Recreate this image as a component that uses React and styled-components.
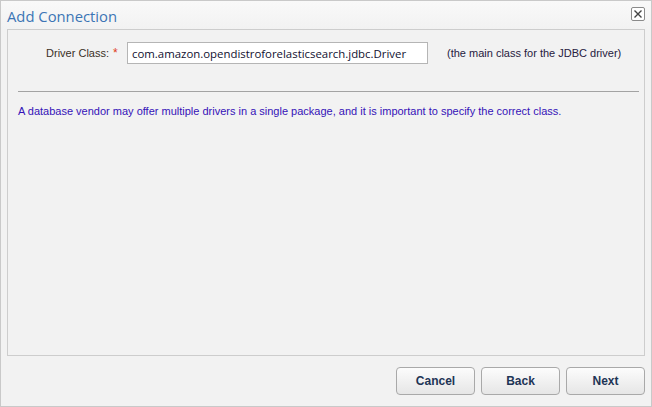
import React from 'react';
import styled, { createGlobalStyle } from 'styled-components';

const GlobalStyle = createGlobalStyle`
  html, body {
    margin: 0;
    padding: 0;
    background: #fff;
  }
  * {
    box-sizing: border-box;
  }
`;

const Window = styled.div`
  width: 652px;
  height: 407px;
  border: 1px solid #c9c9c9;
  background: #f2f2f2;
  display: flex;
  flex-direction: column;
  font-family: 'Liberation Sans', Arial, sans-serif;
`;

const TitleBar = styled.div`
  height: 28px;
  display: flex;
  align-items: center;
  justify-content: space-between;
  padding: 0 6px 0 6px;
  background: linear-gradient(#f9f9f9, #f2f2f2);
`;

const Title = styled.div`
  font-family: 'Open Sans', 'Liberation Sans', sans-serif;
  font-size: 14.8px;
  color: #3c75b5;
  margin-top: 2px;
`;

const CloseButton = styled.div`
  width: 14px;
  height: 14px;
  border: 1px solid #8a8a8a;
  border-radius: 2px;
  background: #fff;
  display: flex;
  align-items: center;
  justify-content: center;
  margin-top: -2px;
`;

const Panel = styled.div`
  flex: 1;
  margin: 0 6px;
  border: 1px solid #cdcdcd;
  padding: 12px 5px 0 10px;
`;

const FormRow = styled.div`
  display: flex;
  align-items: center;
  height: 22px;
`;

const Label = styled.div`
  width: 91px;
  text-align: right;
  font-size: 11px;
  color: #3a3026;
`;

const Required = styled.span`
  color: #e03b1a;
  font-size: 12px;
  margin-left: 4px;
  width: 14px;
`;

const TextInput = styled.input`
  width: 301px;
  height: 22px;
  border: 1px solid #b5b5b5;
  background: #fff;
  padding: 0 4px;
  font-family: 'Open Sans', 'Liberation Sans', sans-serif;
  font-size: 11.4px;
  color: #101030;
  outline: none;
`;

const Hint = styled.div`
  margin-left: 19px;
  font-size: 11px;
  color: #262040;
`;

const Divider = styled.hr`
  margin: 27px 0 0 0;
  border: none;
  border-top: 1px solid #a3a3a3;
  height: 0;
`;

const Description = styled.p`
  margin: 13px 0 0;
  font-size: 11px;
  color: #3512b8;
`;

const Footer = styled.div`
  height: 50px;
  display: flex;
  justify-content: flex-end;
  align-items: flex-start;
  gap: 6px;
  padding: 11px 6px 0 0;
`;

const Button = styled.button`
  width: 79px;
  height: 28px;
  border: 1px solid #a9a9a9;
  border-radius: 4px;
  background: linear-gradient(#fcfcfc, #e6e6e6);
  font-family: 'Liberation Sans', Arial, sans-serif;
  font-weight: bold;
  font-size: 12px;
  color: #1e3556;
  cursor: pointer;
`;

export default function App() {
  return (
    <>
      <GlobalStyle />
      <Window>
        <TitleBar>
          <Title>Add Connection</Title>
          <CloseButton>
            <svg width="10" height="10" viewBox="0 0 10 10">
              <path d="M1.5 1.5 L8.5 8.5 M8.5 1.5 L1.5 8.5" stroke="#444" strokeWidth="1.4" />
            </svg>
          </CloseButton>
        </TitleBar>
        <Panel>
          <FormRow>
            <Label>Driver Class:</Label>
            <Required>*</Required>
            <TextInput defaultValue="com.amazon.opendistroforelasticsearch.jdbc.Driver" />
            <Hint>(the main class for the JDBC driver)</Hint>
          </FormRow>
          <Divider />
          <Description>
            A database vendor may offer multiple drivers in a single package, and it is important to specify the correct class.
          </Description>
        </Panel>
        <Footer>
          <Button>Cancel</Button>
          <Button>Back</Button>
          <Button>Next</Button>
        </Footer>
      </Window>
    </>
  );
}
